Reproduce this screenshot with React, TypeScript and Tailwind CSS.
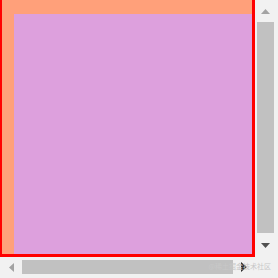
import React from "react";

export default function App() {
  return (
    <div className="w-[278px] h-[278px] overflow-hidden bg-white flex flex-col" style={{ fontFamily: '"Noto Sans CJK SC", sans-serif' }}>
      <div className="flex h-[257px]">
        <div className="w-[255px] h-[257px] bg-[#ffa07a] border-l-2 border-r-[3px] border-b-[3px] border-[#ff0000] pl-[12px] pt-[14px]">
          <div className="w-full h-full bg-[#dda0dd]" />
        </div>
        <div className="w-[23px] h-[257px] bg-[#f1f1f1] flex flex-col items-center pl-[2px] pr-[4px]">
          <div className="h-[22px] w-full flex items-center justify-center">
            <svg width="9" height="5" viewBox="0 0 9 5"><path d="M0 5 L4.5 0 L9 5 Z" fill="#a3a3a3" /></svg>
          </div>
          <div className="w-full h-[211px] bg-[#c1c1c1]" />
          <div className="flex-1 w-full flex items-center justify-center">
            <svg width="9" height="5" viewBox="0 0 9 5"><path d="M0 0 L4.5 5 L9 0 Z" fill="#505050" /></svg>
          </div>
        </div>
      </div>
      <div className="flex h-[21px]">
        <div className="w-[255px] h-[21px] bg-[#f1f1f1] flex items-center pt-[3px] pb-[4px] relative">
          <div className="w-[22px] h-full flex items-center justify-center">
            <svg width="5" height="9" viewBox="0 0 5 9"><path d="M5 0 L0 4.5 L5 9 Z" fill="#a3a3a3" /></svg>
          </div>
          <div className="w-[211px] h-full bg-[#c1c1c1]" />
          <div className="flex-1 h-full flex items-center justify-center">
            <svg width="6" height="10" viewBox="0 0 6 10"><path d="M0 0 L6 5 L0 10 Z" fill="#303030" /></svg>
          </div>
          <span className="absolute right-[-16px] top-[5px] text-[7px] leading-[9px] text-[#c8c8c8] whitespace-nowrap">@稀土掘金技术社区</span>
        </div>
        <div className="w-[23px] h-[21px] bg-[#f1f1f1]" />
      </div>
    </div>
  );
}
